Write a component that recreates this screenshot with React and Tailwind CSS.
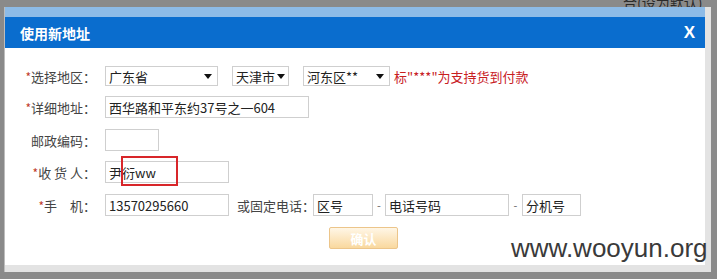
import React from 'react';

const font = { fontFamily: '"Noto Sans CJK SC", "Liberation Sans", sans-serif' };

// 下拉框
function FakeSelect({ text, className }) {
  return (
    <div className={`h-[20px] border border-[#cfcfcf] bg-white flex items-center justify-between pl-[3px] pr-[5px] text-[13px] text-[#222] ${className}`}>
      <span className="leading-none whitespace-nowrap">{text}</span>
      <span className="shrink-0 ml-[2px] w-0 h-0 border-l-[4px] border-r-[4px] border-t-[5px] border-l-transparent border-r-transparent border-t-[#111]" />
    </div>
  );
}

function Field({ value, className, children }) {
  return (
    <div className={`relative h-[22px] border border-[#cfcfcf] bg-white flex items-center pl-[3px] text-[13px] text-[#222] ${className}`}>
      <span className="leading-none whitespace-nowrap">{value}</span>
      {children}
    </div>
  );
}

function Label({ req, children }) {
  return (
    <div className="w-[91px] shrink-0 text-right text-[13px] text-[#444] leading-none whitespace-pre">
      {req && <span className="text-[#c0392b] text-[12px]">*</span>}
      {children}
    </div>
  );
}

export default function App() {
  return (
    <div className="relative w-[717px] h-[279px] bg-[#8a8a8a] overflow-hidden" style={font}>
      {/* 背景里被遮住的文字 */}
      <span className="absolute left-[623px] top-[-8px] text-[14px] text-[#2a2a2a] whitespace-nowrap">合(设为默认)</span>

      <div className="absolute left-[4px] top-[7px] w-[707px] h-[265px] bg-[#e3e3e3] border-l border-[#bdbdbd]">
        <div className="w-[700px] h-[258px] flex flex-col bg-white">
          {/* 头部 */}
          <div className="h-[10px] bg-[#8dbbe7]" />
          <div className="h-[31px] bg-[#0a6dce] flex items-center justify-between pl-[15px] pr-[10px]">
            <span className="text-white text-[14px] font-bold leading-none">使用新地址</span>
            <span className="text-white text-[17px] font-bold leading-none" style={{ fontFamily: '"Liberation Sans", sans-serif' }}>X</span>
          </div>

          {/* 表单 */}
          <div className="flex flex-col pt-[17px]">
            <div className="flex items-center h-[22px]">
              <Label req>选择地区：</Label>
              <FakeSelect text="广东省" className="ml-[9px] w-[113px]" />
              <FakeSelect text="天津市" className="ml-[14px] w-[57px]" />
              <FakeSelect text="河东区**" className="ml-[14px] w-[87px]" />
              <span className="ml-[4px] text-[13px] text-[#c8201f] leading-none whitespace-nowrap">标"***"为支持货到付款</span>
            </div>

            <div className="flex items-center h-[22px] mt-[9px]">
              <Label req>详细地址：</Label>
              <Field value="西华路和平东约37号之一604" className="ml-[9px] w-[204px]" />
            </div>

            <div className="flex items-center h-[22px] mt-[11px]">
              <Label>邮政编码：</Label>
              <Field value="" className="ml-[9px] w-[54px]" />
            </div>

            <div className="flex items-center h-[22px] mt-[10px]">
              <Label req>{'收 货 人：'}</Label>
              <Field value="尹衍ww" className="ml-[9px] w-[124px]">
                <div className="absolute left-[15px] top-[-6px] w-[57px] h-[30px] border-2 border-[#d8262a]" />
              </Field>
            </div>

            <div className="flex items-center h-[22px] mt-[11px]">
              <Label req>{'手　机：'}</Label>
              <Field value="13570295660" className="ml-[9px] w-[124px]" />
              <span className="ml-[8px] w-[76px] text-[13px] text-[#444] leading-none whitespace-nowrap">或固定电话：</span>
              <Field value="区号" className="w-[60px]" />
              <span className="w-[12px] text-center text-[11px] text-[#666] leading-none">-</span>
              <Field value="电话号码" className="w-[124px]" />
              <span className="w-[13px] text-center text-[11px] text-[#666] leading-none">-</span>
              <Field value="分机号" className="w-[59px]" />
            </div>

            <div className="flex h-[22px] mt-[11px] pl-[324px]">
              <button className="w-[69px] h-[22px] rounded-[2px] border border-[#ecc58a] bg-gradient-to-b from-[#fff6e6] to-[#f9d89e] text-white text-[13px] font-bold leading-none">
                确认
              </button>
            </div>
          </div>
        </div>
      </div>

      {/* 水印 */}
      <span
        className="absolute left-[511px] top-[235px] text-[26px] leading-none text-[#3a3a3a] whitespace-nowrap"
        style={{ fontFamily: '"Liberation Sans", sans-serif' }}
      >
        www.wooyun.org
      </span>
    </div>
  );
}
